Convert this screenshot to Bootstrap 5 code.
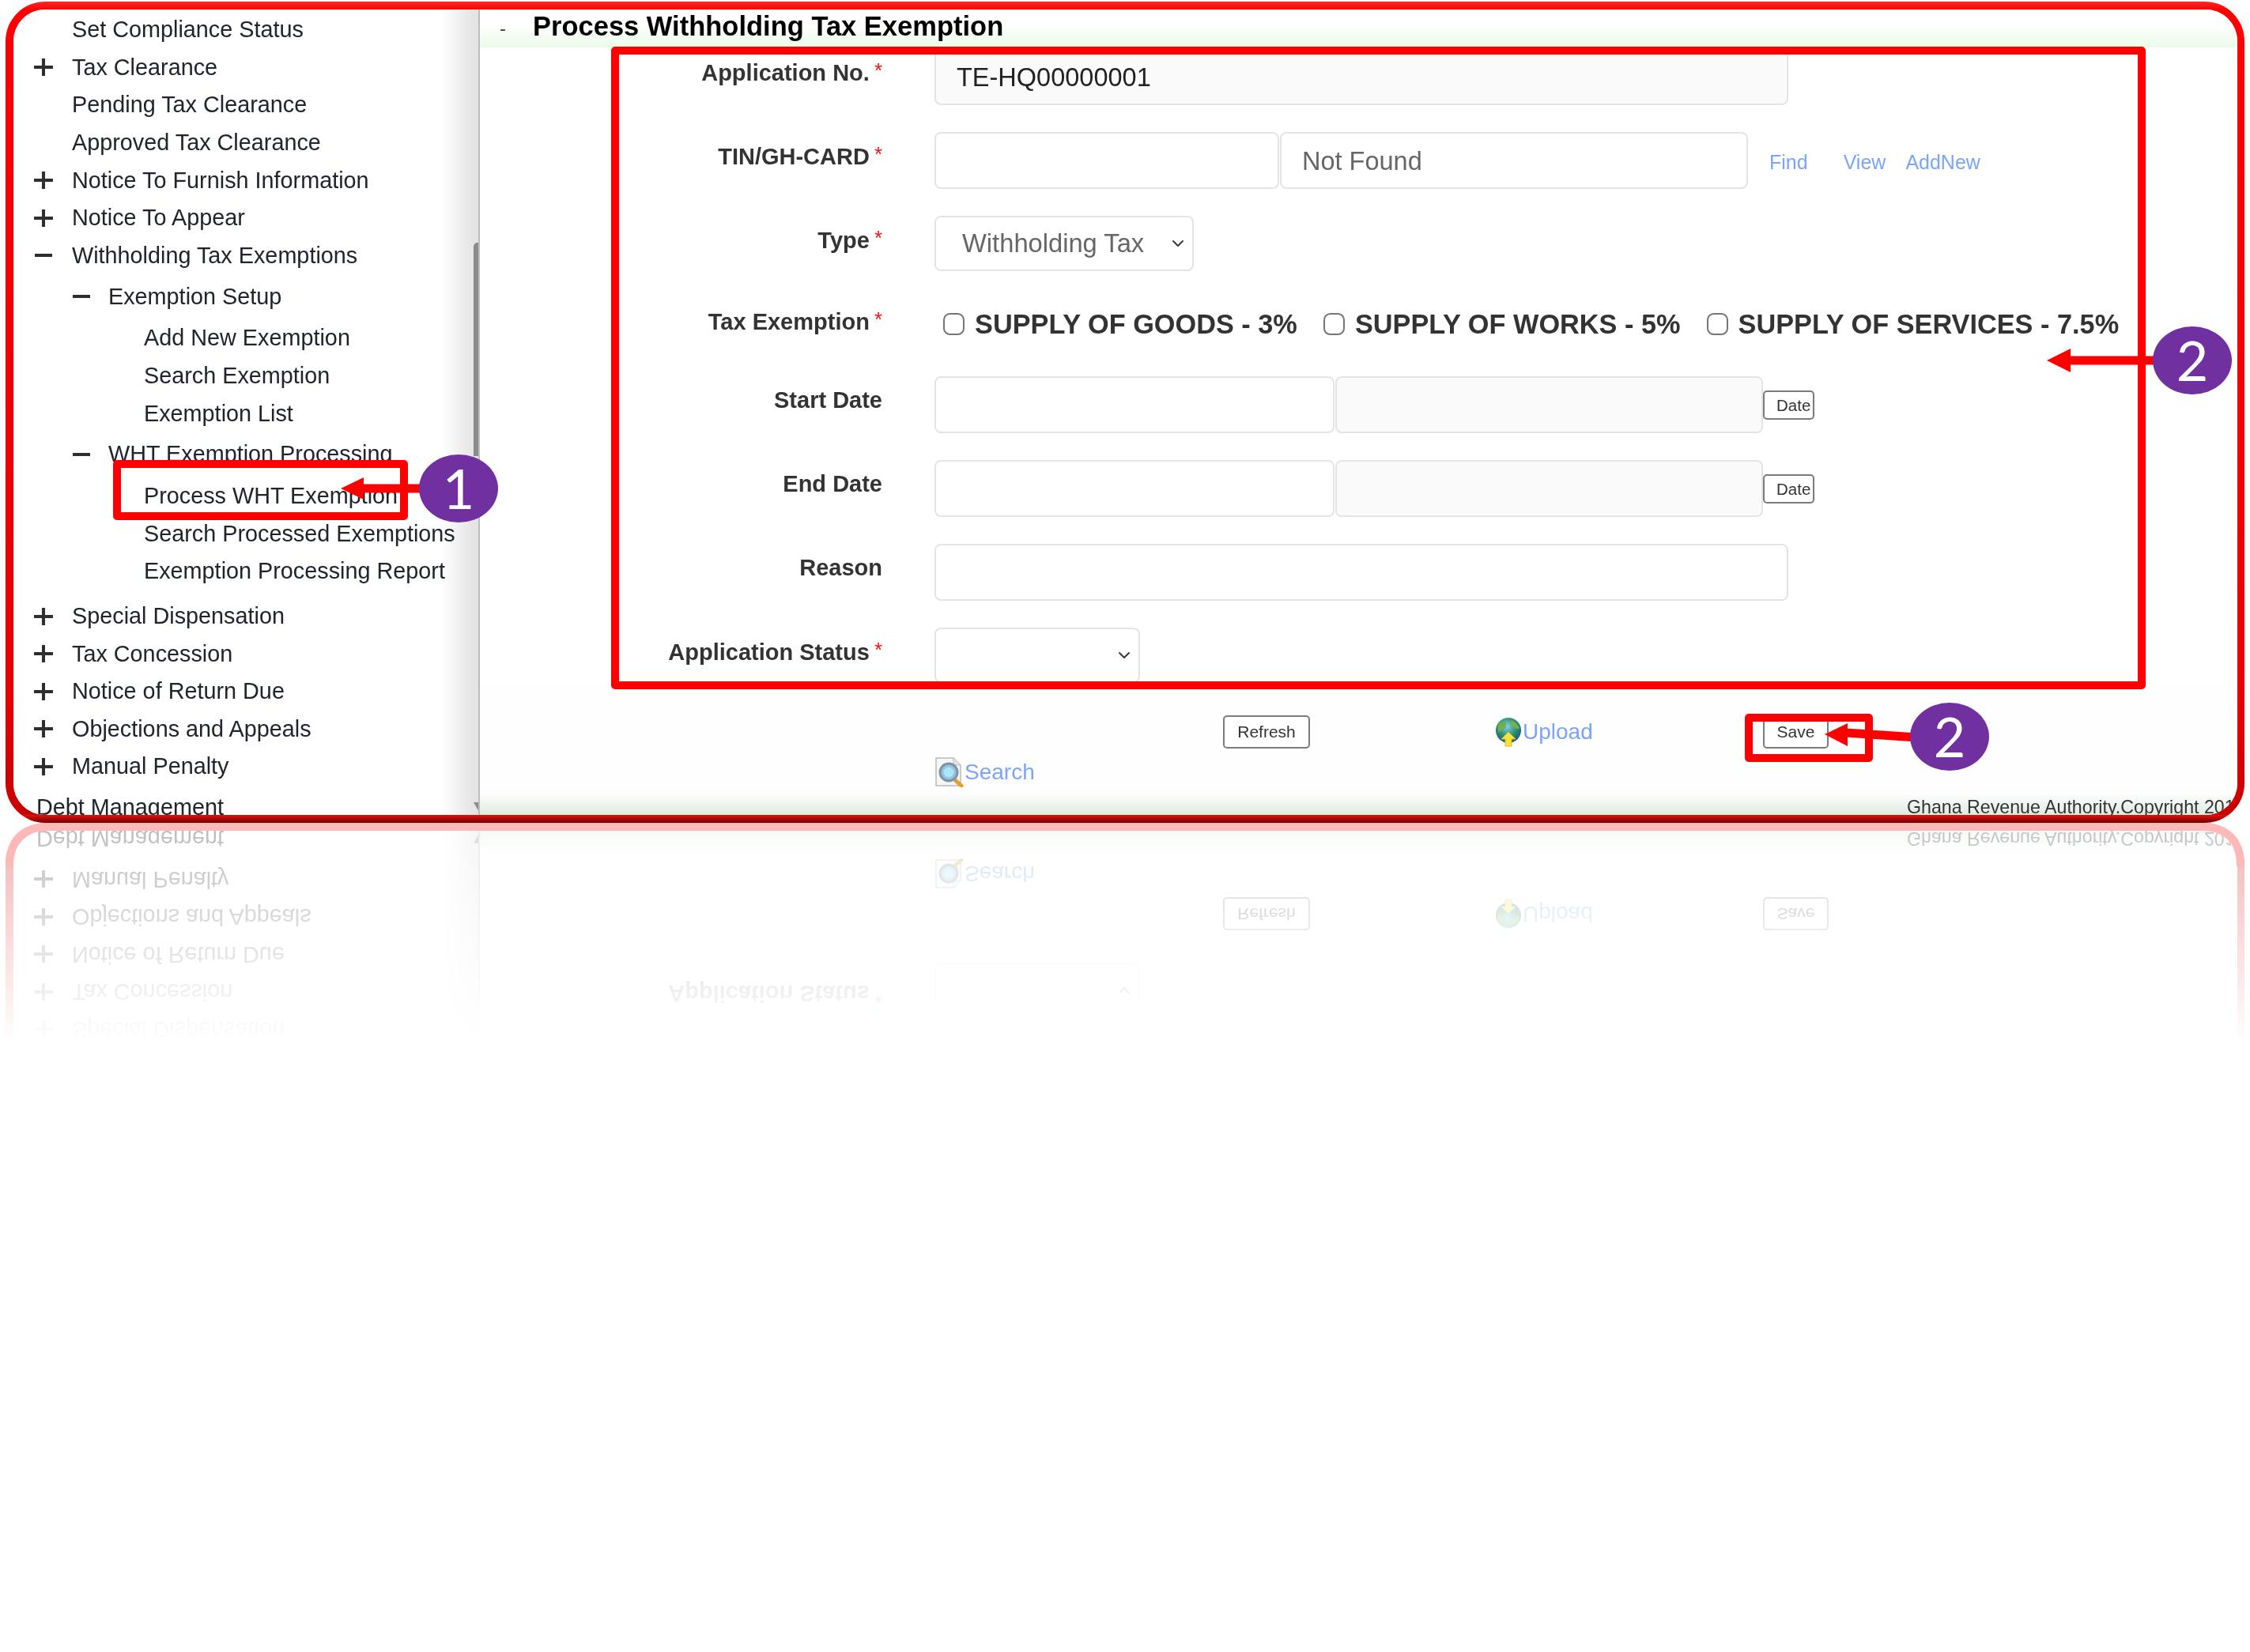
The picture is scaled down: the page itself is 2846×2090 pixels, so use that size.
<!DOCTYPE html>
<html lang="en">
<head>
    <meta charset="UTF-8">
    <title>Process Withholding Tax Exemption</title>
    <link rel="stylesheet" href="https://cdn.jsdelivr.net/npm/bootstrap@5.3.3/dist/css/bootstrap.min.css">
<style>
    body { background: #fff; font-family: "Liberation Sans", Arial, sans-serif; }
    .stage { position: relative; width: 2846px; height: 2090px; padding: 2px 0 0 7px; overflow: hidden; }
    .overlay { position: absolute; left: 0; top: 0; }
    .overlay text { font-family: Lato, sans-serif; font-size: 70px; fill: #fff; text-anchor: middle; }

    /* red bevelled frame, reflected below */
    .shot-frame {
        width: 2832px; height: 1039px; padding: 10px 9px 10px 10px; border-radius: 50px;
        background: linear-gradient(#ff2828 0, #f00 1%, #e80000 85%, #c80000 98.9%, #dc1010 99.1%, #700000 100%);
        -webkit-box-reflect: below 0 linear-gradient(transparent 73%, rgba(255,255,255,.3) 100%);
    }
    .shot-inner { height: 100%; border-radius: 40px; overflow: hidden; background: #fff; }

    /* left menu */
    .side-menu { position: relative; width: 590px; flex: none; overflow: hidden; color: #20242c; padding-top: 2px;
        background: linear-gradient(to right, #fff 92%, #e4e4e4 99%); border-right: 2px solid #bdbdbd; }
    .side-menu ul { list-style: none; margin: 0; padding: 0; }
    .menu-row { height: 47.6px; display: flex; align-items: center; white-space: nowrap; font-size: 28.8px; }
    .lvl1 { padding-left: 26px; }
    .lvl2 { padding-left: 74px; height: 52px; }
    .lvl3 { padding-left: 165px; }
    .lvl0 { padding-left: 29px; margin-top: 4px; }
    .gap-top { margin-top: 9px; }
    .gap-sub { margin-top: 2px; }
    .gap-add { margin-top: 3px; }
    .gap-wht { margin-top: 2px; }
    .gap-proc { margin-top: 3px; }
    .ico-slot { width: 48px; flex: none; display: flex; }
    .lvl2 .ico-slot { width: 46px; }
    .scroll-thumb { position: absolute; right: -2px; top: 295px; width: 8px; height: 270px;
        background: #8b8b8b; border-radius: 5px 0 0 0; }
    .scroll-end { position: absolute; right: -2px; bottom: 2px; width: 8px; height: 14px;
        background: #8b8b8b; clip-path: polygon(0 0, 100% 0, 100% 100%); }

    /* main panel */
    .main-pane { min-width: 0; }
    .title-bar { height: 48px; flex: none; display: flex; color: #000;
        background: linear-gradient(#fff 35%, #ebfbe8 100%); }
    .title-dash { width: 67px; padding-left: 25px; font-size: 24px; line-height: 48px; color: #444; }
    .title-text { font-size: 34.5px; font-weight: 700; line-height: 42px; white-space: nowrap; }

    .form-zone { padding-top: 1px; }
    .fld-row { display: flex; align-items: flex-start; height: 72px; margin-bottom: 34px; }
    .fld-row.short { height: 70px; margin-bottom: 33px; }
    .fld-row.checks { height: 68px; margin-bottom: 32px; padding-top: 19px; }
    .fld-label { width: 509px; margin-right: 66px; flex: none; padding: 0; text-align: right;
        font-size: 29px; font-weight: 700; line-height: 61px; color: #333; white-space: nowrap; }
    .fld-label.has-req { line-height: 56px; }
    .fld-label.for-checks { margin-top: -19px; }
    .req { color: #f01010; font-weight: 400; font-size: 26px; vertical-align: 4px; margin-left: 6px; }
    .fld-input { height: 100%; border: 2px solid #e4e4e4; border-radius: 8px; padding: 2px 26px 0;
        font-size: 32.5px; color: #666; box-shadow: none; background-color: #fff; }
    .fld-input.grey { background-color: #fafafa; }
    .fld-input.dark { color: #222; }
    .w-full { width: 1080px; }
    .w-tin { width: 436px; margin-right: 1px; }
    .w-name { width: 592px; }
    .w-date1 { width: 506px; margin-right: 1px; }
    .w-date2 { width: 541px; }
    .sel-input { height: 100%; border: 2px solid #e4e4e4; border-radius: 8px; padding: 0 40px 0 33px;
        font-size: 32.7px; color: #666; box-shadow: none;
        background-position: right 8px center; background-size: 20px 16px; }
    .w-type { width: 328px; }
    .w-status { width: 260px; }
    .tin-links { display: flex; padding-top: 24px; font-size: 25px; line-height: 28px; }
    .tin-links a, .act-link { color: #7aa5fb; text-decoration: none; }
    .tin-links a:nth-child(1) { margin-left: 27px; }
    .tin-links a:nth-child(2) { margin-left: 45px; }
    .tin-links a:nth-child(3) { margin-left: 25px; }
    .chk-item { display: flex; align-items: center; font-size: 34.3px; font-weight: 700; color: #333;
        white-space: nowrap; line-height: 30px; }
    .chk-box { width: 27px; height: 28px; margin: 0 13px 0 11px; border: 2px solid #757575;
        border-radius: 5px; flex: none; }
    .chk-item + .chk-item { margin-left: 22px; }
    .mini-btn { height: 42px; padding: 0; border: 2px solid #7b7b7b; border-radius: 5px;
        background: #fff; color: #333; font-size: 21px; line-height: 36px; }
    .date-btn { width: 65px; height: 37px; margin-top: 18px; padding-left: 15px; text-align: left;
        font-size: 20.5px; line-height: 32px; white-space: nowrap; overflow: hidden; }

    .act-zone { background: #fefefe; flex: 1; min-height: 0; display: flex; flex-direction: column; padding-top: 13px; }
    .act-row { display: flex; align-items: center; height: 42px; }
    .act-one { padding-left: 940px; }
    .act-two { padding-left: 576px; margin-top: 13px; }
    .act-link { display: flex; align-items: center; font-size: 28px; line-height: 36px; }
    .act-refresh { width: 110px; }
    .act-up { margin-left: 233px; width: 126px; }
    .act-save { margin-left: 214px; width: 83px; }
    .foot-strip { margin-top: auto; height: 27px; padding-left: 1805px; white-space: nowrap; overflow: hidden;
        font-size: 23.2px; line-height: 34px; color: #333; background: linear-gradient(#fefefe, #dcecdd); }
</style>
</head>
<body>
<svg width="0" height="0" class="d-block">
    <symbol id="plus" viewBox="0 0 24 24"><path d="M12 1v22M0 12h24" stroke="#2e2e2e" stroke-width="4" fill="none"/></symbol>
    <symbol id="minus" viewBox="0 0 24 24"><path d="M1 12h22" stroke="#2e2e2e" stroke-width="4" fill="none"/></symbol>
</svg>
<div class="stage">
    <div class="shot-frame">
        <div class="shot-inner d-flex">
            <nav class="side-menu">
                <ul>
                    <li class="menu-row lvl1"><span class="ico-slot"></span>Set Compliance Status</li>
                    <li class="menu-row lvl1"><span class="ico-slot"><svg width="24" height="24"><use href="#plus"/></svg></span>Tax Clearance</li>
                    <li class="menu-row lvl1"><span class="ico-slot"></span>Pending Tax Clearance</li>
                    <li class="menu-row lvl1"><span class="ico-slot"></span>Approved Tax Clearance</li>
                    <li class="menu-row lvl1"><span class="ico-slot"><svg width="24" height="24"><use href="#plus"/></svg></span>Notice To Furnish Information</li>
                    <li class="menu-row lvl1"><span class="ico-slot"><svg width="24" height="24"><use href="#plus"/></svg></span>Notice To Appear</li>
                    <li class="menu-row lvl1"><span class="ico-slot"><svg width="24" height="24"><use href="#minus"/></svg></span>Withholding Tax Exemptions</li>
                    <li class="menu-row lvl2 gap-sub"><span class="ico-slot"><svg width="24" height="24"><use href="#minus"/></svg></span>Exemption Setup</li>
                    <li class="menu-row lvl3 gap-add"><span></span>Add New Exemption</li>
                    <li class="menu-row lvl3"><span></span>Search Exemption</li>
                    <li class="menu-row lvl3"><span></span>Exemption List</li>
                    <li class="menu-row lvl2 gap-wht"><span class="ico-slot"><svg width="24" height="24"><use href="#minus"/></svg></span>WHT Exemption Processing</li>
                    <li class="menu-row lvl3 gap-proc"><span></span>Process WHT Exemption</li>
                    <li class="menu-row lvl3"><span></span>Search Processed Exemptions</li>
                    <li class="menu-row lvl3"><span></span>Exemption Processing Report</li>
                    <li class="menu-row lvl1 gap-top"><span class="ico-slot"><svg width="24" height="24"><use href="#plus"/></svg></span>Special Dispensation</li>
                    <li class="menu-row lvl1"><span class="ico-slot"><svg width="24" height="24"><use href="#plus"/></svg></span>Tax Concession</li>
                    <li class="menu-row lvl1"><span class="ico-slot"><svg width="24" height="24"><use href="#plus"/></svg></span>Notice of Return Due</li>
                    <li class="menu-row lvl1"><span class="ico-slot"><svg width="24" height="24"><use href="#plus"/></svg></span>Objections and Appeals</li>
                    <li class="menu-row lvl1"><span class="ico-slot"><svg width="24" height="24"><use href="#plus"/></svg></span>Manual Penalty</li>
                    <li class="menu-row lvl0">Debt Management</li>
                </ul>
                <div class="scroll-thumb"></div>
                <div class="scroll-end"></div>
            </nav>
            <main class="main-pane flex-grow-1 d-flex flex-column">
                <div class="title-bar">
                    <span class="title-dash">-</span>
                    <span class="title-text">Process Withholding Tax Exemption</span>
                </div>
                <form class="form-zone">
                    <div class="fld-row">
                        <label class="fld-label has-req">Application No.<span class="req">*</span></label>
                        <input type="text" class="form-control fld-input grey dark w-full" value="TE-HQ00000001" readonly>
                    </div>
                    <div class="fld-row">
                        <label class="fld-label has-req">TIN/GH-CARD<span class="req">*</span></label>
                        <input type="text" class="form-control fld-input w-tin">
                        <input type="text" class="form-control fld-input w-name" value="Not Found" readonly>
                        <div class="tin-links"><a href="#">Find</a><a href="#">View</a><a href="#">AddNew</a></div>
                    </div>
                    <div class="fld-row short">
                        <label class="fld-label has-req">Type<span class="req">*</span></label>
                        <select class="form-select sel-input w-type"><option>Withholding Tax</option></select>
                    </div>
                    <div class="fld-row checks">
                        <label class="fld-label has-req for-checks">Tax Exemption<span class="req">*</span></label>
                        <label class="chk-item"><input type="checkbox" class="form-check-input chk-box">SUPPLY OF GOODS - 3%</label>
                        <label class="chk-item"><input type="checkbox" class="form-check-input chk-box">SUPPLY OF WORKS - 5%</label>
                        <label class="chk-item"><input type="checkbox" class="form-check-input chk-box">SUPPLY OF SERVICES - 7.5%</label>
                    </div>
                    <div class="fld-row">
                        <label class="fld-label">Start Date</label>
                        <input type="text" class="form-control fld-input w-date1">
                        <input type="text" class="form-control fld-input grey w-date2" readonly>
                        <button type="button" class="btn mini-btn date-btn">Date</button>
                    </div>
                    <div class="fld-row">
                        <label class="fld-label">End Date</label>
                        <input type="text" class="form-control fld-input w-date1">
                        <input type="text" class="form-control fld-input grey w-date2" readonly>
                        <button type="button" class="btn mini-btn date-btn">Date</button>
                    </div>
                    <div class="fld-row">
                        <label class="fld-label">Reason</label>
                        <input type="text" class="form-control fld-input w-full">
                    </div>
                    <div class="fld-row short mb-0">
                        <label class="fld-label has-req">Application Status<span class="req">*</span></label>
                        <select class="form-select sel-input w-status"><option></option></select>
                    </div>
                </form>
                <div class="act-zone">
                    <div class="act-row act-one mt-4 pt-2">
                        <button type="button" class="btn mini-btn act-refresh">Refresh</button>
                        <a href="#" class="act-link act-up">
                            <svg width="36" height="38" viewBox="0 0 36 38">
                                <defs><radialGradient id="globe" cx=".45" cy=".35" r=".7"><stop offset="0" stop-color="#7fd0e8"/><stop offset=".55" stop-color="#2b8f6a"/><stop offset="1" stop-color="#1a4f8f"/></radialGradient></defs>
                                <circle cx="18" cy="17" r="16" fill="url(#globe)"/>
                                <path d="M6 8c6-4 10 0 9 4s-7 3-9 8c-2-4-2-8 0-12zM22 5c5 1 9 5 10 10-5 1-7-2-10-4s-2-4 0-6z" fill="#6fb04a"/>
                                <path d="M18 19l9 9h-5v9h-8v-9H9z" fill="#f6e23c" stroke="#d7b820" stroke-width="1"/>
                            </svg>Upload
                        </a>
                        <button type="button" class="btn mini-btn act-save">Save</button>
                    </div>
                    <div class="act-row act-two">
                        <a href="#" class="act-link">
                            <svg width="37" height="38" viewBox="0 0 37 38">
                                <path d="M1 1h22l9 9v26H1z" fill="#f6f6f6" stroke="#b9b9b9" stroke-width="1.5"/>
                                <path d="M23 1v9h9" fill="#e4e4e4" stroke="#b9b9b9" stroke-width="1"/>
                                <path d="M23 27l10 9" stroke="#e2a02f" stroke-width="5" stroke-linecap="round"/>
                                <circle cx="17" cy="19" r="11" fill="#9ac0d8" stroke="#7f92a6" stroke-width="3"/>
                                <circle cx="17" cy="19" r="6.5" fill="#a8e6fb"/>
                            </svg>Search
                        </a>
                    </div>
                    <div class="foot-strip">Ghana Revenue Authority.Copyright 2018</div>
                </div>
            </main>
        </div>
    </div>

    <!-- call-outs over the screenshot, not reflected -->
    <svg class="overlay" width="2846" height="1100" viewBox="0 0 2846 1100">
        <path d="M12 1096Q12 1046 62 1046H2784Q2834 1046 2834 1096" fill="none" stroke="#ffb8b8" stroke-width="10"/>
        <g fill="none" stroke="#f00" stroke-width="10" stroke-linejoin="round">
            <rect x="778" y="64" width="1931" height="803"/>
            <rect x="148" y="587" width="363" height="66"/>
            <rect x="2212" y="908" width="152" height="51"/>
            <path d="M458 618H535M2617 456H2728M2335 927L2425 933" stroke-width="11"/>
        </g>
        <g fill="#f00">
            <path d="M431 618l29-14v28z"/>
            <path d="M2589 456l30-15v30z"/>
            <path d="M2308 929l29-14v29z"/>
        </g>
        <g fill="#7030a0">
            <ellipse cx="580" cy="618" rx="50" ry="43"/>
            <ellipse cx="2773" cy="456" rx="50" ry="43"/>
            <ellipse cx="2466" cy="932" rx="50" ry="43"/>
        </g>
        <text x="580" y="644">1</text>
        <text x="2773" y="482">2</text>
        <text x="2466" y="958">2</text>
    </svg>
</div>
<script src="https://cdn.jsdelivr.net/npm/bootstrap@5.3.3/dist/js/bootstrap.bundle.min.js"></script>
</body>
</html>
